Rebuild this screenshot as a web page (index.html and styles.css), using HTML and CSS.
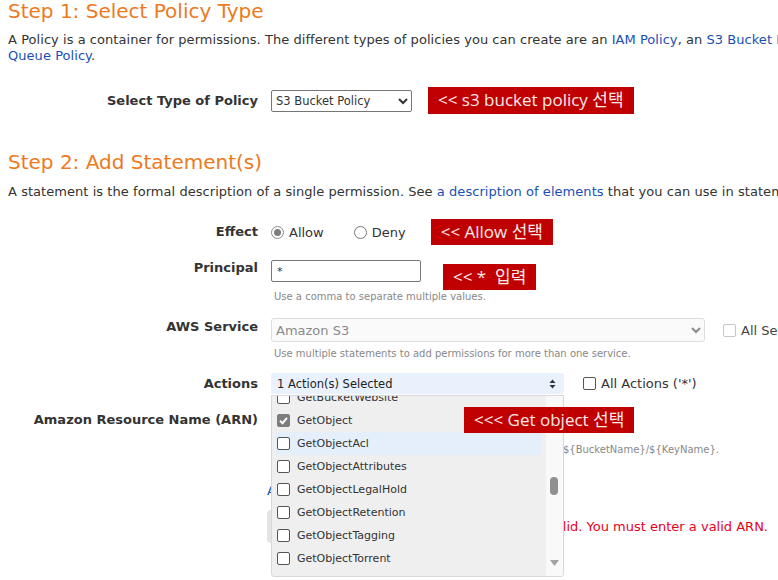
FILE: index.html
```html
<!DOCTYPE html>
<html lang="en">
<head>
    <meta charset="UTF-8">
    <title>AWS Policy Generator</title>
    <link rel="stylesheet" href="styles.css">
</head>
<body>
<div class="page">
    <h1 class="step-title">Step 1: Select Policy Type</h1>
    <p class="intro">
        <span class="line">A Policy is a container for permissions. The different types of policies you can create are an <a href="#">IAM Policy</a>, an <a href="#">S3 Bucket Policy</a>, an <a href="#">SNS Topic Policy</a>, a <a href="#">VPC Endpoint Policy</a>, and an <a href="#">SQS</a></span>
        <span class="line"><a href="#">Queue Policy</a>.</span>
    </p>

    <div class="form-row row-type">
        <label class="field-label">Select Type of Policy</label>
        <div class="field">
            <select class="policy-select">
                <option>S3 Bucket Policy</option>
            </select>
            <span class="note note-type">&lt;&lt; s3 bucket policy 선택</span>
        </div>
    </div>

    <h1 class="step-title step-two">Step 2: Add Statement(s)</h1>
    <p class="intro intro-two">
        <span class="line">A statement is the formal description of a single permission. See <a href="#">a description of elements</a> that you can use in statements.</span>
    </p>

    <div class="form-row row-effect">
        <label class="field-label">Effect</label>
        <div class="field">
            <span class="radio checked"></span><span class="radio-text">Allow</span>
            <span class="radio radio-deny"></span><span class="radio-text">Deny</span>
            <span class="note note-effect">&lt;&lt; Allow 선택</span>
        </div>
    </div>

    <div class="form-row row-principal">
        <label class="field-label">Principal</label>
        <div class="field field-stack">
            <div class="field-line">
                <input class="text-input" type="text" value="*">
                <span class="note note-principal">&lt;&lt; *&nbsp; 입력</span>
            </div>
            <div class="help">Use a comma to separate multiple values.</div>
        </div>
    </div>

    <div class="form-row row-service">
        <label class="field-label">AWS Service</label>
        <div class="field field-stack">
            <div class="field-line">
                <select class="service-select" disabled>
                    <option>Amazon S3</option>
                </select>
                <span class="check disabled all-services"></span><span class="check-text muted">All Services ('*')</span>
            </div>
            <div class="help help-service">Use multiple statements to add permissions for more than one service.</div>
        </div>
    </div>

    <div class="form-row row-actions">
        <label class="field-label">Actions</label>
        <div class="field">
            <div class="actions-box">
                <div class="actions-toggle">
                    <span>1 Action(s) Selected</span>
                    <svg class="updown" width="7" height="10" viewBox="0 0 7 10"><path d="M3.5 0.5 L6.5 4 L0.5 4 Z M3.5 9.5 L6.5 6 L0.5 6 Z" fill="#333"/></svg>
                </div>
                <div class="actions-menu">
                    <ul class="action-list">
                        <li><span class="check"></span>GetBucketWebsite</li>
                        <li><span class="check checked"><svg width="11" height="11" viewBox="0 0 11 11"><path d="M2 5.8 L4.5 8.2 L9 2.8" fill="none" stroke="#fff" stroke-width="2"/></svg></span>GetObject</li>
                        <li class="hover"><span class="check"></span>GetObjectAcl</li>
                        <li><span class="check"></span>GetObjectAttributes</li>
                        <li><span class="check"></span>GetObjectLegalHold</li>
                        <li><span class="check"></span>GetObjectRetention</li>
                        <li><span class="check"></span>GetObjectTagging</li>
                        <li><span class="check"></span>GetObjectTorrent</li>
                    </ul>
                    <div class="fake-scroll">
                        <span class="thumb"></span>
                        <svg class="arrow-down" width="9" height="6" viewBox="0 0 9 6"><path d="M0 0 L9 0 L4.5 6 Z" fill="#a3a3a3"/></svg>
                    </div>
                </div>
                <span class="note note-object">&lt;&lt;&lt; Get object 선택</span>
            </div>
            <span class="check all-actions"></span><span class="check-text">All Actions ('*')</span>
        </div>
    </div>

    <div class="form-row row-arn">
        <label class="field-label">Amazon Resource Name (ARN)</label>
        <div class="field field-stack">
            <input class="text-input arn-input" type="text">
            <div class="help help-arn"><span>ARN should follow format arn:aws:s3:::${BucketName}/${KeyName}.</span></div>
            <a class="add-link" href="#">Add Conditions (Optional)</a>
            <div class="submit-line">
                <button class="add-button">Add Statement</button>
                <div class="error"><span>Resource field is not valid. You must enter a valid ARN.</span></div>
            </div>
        </div>
    </div>
</div>
</body>
</html>
```

FILE: styles.css
```css
body {
    margin: 0;
    font-family: "DejaVu Sans", Verdana, sans-serif;
    font-size: 13px;
    color: #333;
    background: #fff;
}

.page {
    height: 100vh;
    padding-left: 8px;
    overflow: hidden;
}

a {
    color: #1a4fb4;
    text-decoration: none;
}

.step-title {
    margin: 0;
    font-size: 20px;
    font-weight: normal;
    line-height: 22px;
    color: #ec7a1e;
}

.step-two {
    margin-top: 37px;
}

.intro {
    margin: 10px 0 0;
    line-height: 16px;
    letter-spacing: 0.05px;
}

.intro-two {
    margin-top: 11px;
}

.intro .line {
    display: block;
    white-space: nowrap;
}

/* form rows */
.form-row {
    display: grid;
    grid-template-columns: 250px auto;
    column-gap: 13px;
    align-items: center;
}

.field-label {
    font-weight: bold;
    text-align: right;
    line-height: 16px;
    white-space: nowrap;
}

.field {
    display: flex;
    align-items: center;
    white-space: nowrap;
}

.field-stack {
    flex-direction: column;
    align-items: flex-start;
}

.field-line {
    display: flex;
    align-items: center;
}

.help {
    font-size: 10px;
    line-height: 14px;
    color: #888;
    padding-left: 3px;
    white-space: nowrap;
}

/* red notes */
.note {
    display: inline-block;
    background: #c00000;
    color: #fbeaea;
    font-family: "Open Sans", "Noto Sans CJK KR", sans-serif;
    font-size: 17px;
    line-height: 26px;
    height: 26px;
    padding: 0 10px;
    white-space: nowrap;
}

.row-type {
    margin-top: 23px;
}

.policy-select {
    width: 141px;
    height: 22px;
    font-family: "DejaVu Sans", Verdana, sans-serif;
    font-size: 11.5px;
    color: #333;
    border: 1px solid #767676;
    border-radius: 2px;
    background: #fff;
}

.note-type {
    margin-left: 16px;
    height: 27px;
}

.row-effect {
    margin-top: 19px;
}

.radio {
    display: inline-block;
    width: 11px;
    height: 11px;
    border: 1px solid #767676;
    border-radius: 50%;
    background: #fff;
    position: relative;
}

.radio.checked {
    border-color: #8a8a8a;
}

.radio.checked::after {
    content: "";
    position: absolute;
    left: 2px;
    top: 2px;
    width: 7px;
    height: 7px;
    border-radius: 50%;
    background: #7d7d7d;
}

.radio-text {
    margin-left: 5px;
}

.radio-deny {
    margin-left: 30px;
}

.note-effect {
    margin-left: 25px;
}

.row-principal {
    margin-top: 15px;
    align-items: start;
}

.text-input {
    width: 150px;
    height: 22px;
    box-sizing: border-box;
    border: 1px solid #767676;
    border-radius: 2px;
    padding: 0 5px;
    font-family: "DejaVu Sans", Verdana, sans-serif;
    font-size: 11px;
    color: #333;
}

.row-principal .field-line {
    align-items: flex-start;
}

.note-principal {
    margin-left: 22px;
    margin-top: 4px;
}

.row-service {
    margin-top: 14px;
    align-items: start;
}

.row-service .field-label {
    padding-top: 1px;
}

.service-select {
    width: 434px;
    height: 24px;
    font-family: "DejaVu Sans", Verdana, sans-serif;
    font-size: 13px;
    color: #8a8a8a;
    border: 1px solid #ddd;
    border-radius: 3px;
    background: #fafafa;
    opacity: 1;
}

.help-service {
    margin-top: 5px;
}

.check {
    display: inline-flex;
    align-items: center;
    justify-content: center;
    width: 11px;
    height: 11px;
    border: 1px solid #555;
    border-radius: 2px;
    background: #fff;
    flex: none;
}

.check.disabled {
    border-color: #c6c6c6;
}

.check.checked {
    background: #7d7d7d;
    border-color: #7d7d7d;
}

.check-text {
    margin-left: 5px;
}

.check-text.muted {
    color: #444;
}

.all-services {
    margin-left: 18px;
}

.all-actions {
    margin-left: 19px;
}

/* actions multi select */
.row-actions {
    margin-top: 12px;
}

.actions-box {
    position: relative;
    width: 293px;
}

.actions-toggle {
    display: flex;
    align-items: center;
    justify-content: space-between;
    height: 21px;
    padding: 0 6px;
    background: #e8f1fc;
    border-radius: 3px;
    color: #222;
    font-size: 11.5px;
}

.updown {
    margin-right: 2px;
}

.actions-menu {
    position: absolute;
    left: 0;
    top: 22px;
    width: 293px;
    height: 182px;
    box-sizing: border-box;
    border: 1px solid #d8d8d8;
    border-radius: 0 0 3px 3px;
    background: #efefef;
    overflow: hidden;
    z-index: 2;
}

.action-list {
    list-style: none;
    margin: -10px 0 0;
    padding: 0 0 0 4px;
    width: 266px;
}

.action-list li {
    display: flex;
    align-items: center;
    height: 23px;
    padding-left: 1px;
    border-radius: 3px;
    font-size: 11px;
    color: #333;
}

.action-list li .check {
    margin-right: 7px;
}

.action-list li.hover {
    background: #e5effb;
}

.fake-scroll {
    position: absolute;
    top: 0;
    right: 0;
    width: 17px;
    height: 100%;
    background: #f9f9f9;
}

.thumb {
    position: absolute;
    left: 4px;
    top: 81px;
    width: 8px;
    height: 18px;
    border-radius: 4px;
    background: #909090;
}

.arrow-down {
    position: absolute;
    left: 4px;
    bottom: 10px;
}

.note-object {
    position: absolute;
    left: 193px;
    top: 34px;
    z-index: 3;
}

/* arn */
.row-arn {
    margin-top: 18px;
    align-items: start;
}

.arn-input {
    width: 290px;
}

.help-arn {
    display: flex;
    justify-content: flex-end;
    width: 448px;
    box-sizing: border-box;
    overflow: hidden;
    margin-top: 9px;
}

.add-link {
    margin-top: 27px;
    margin-left: -4px;
    line-height: 14px;
}

.submit-line {
    display: flex;
    align-items: center;
    width: 501px;
    margin-top: 12px;
    margin-left: -4px;
}

.add-button {
    flex: none;
    height: 33px;
    padding: 0 12px;
    border: none;
    border-radius: 4px;
    background: #e4e4e4;
    font-family: "DejaVu Sans", Verdana, sans-serif;
    font-size: 13px;
    color: #333;
}

.error {
    flex: 1;
    min-width: 0;
    display: flex;
    justify-content: flex-end;
    overflow: hidden;
    color: #e8001a;
    white-space: nowrap;
}
```
